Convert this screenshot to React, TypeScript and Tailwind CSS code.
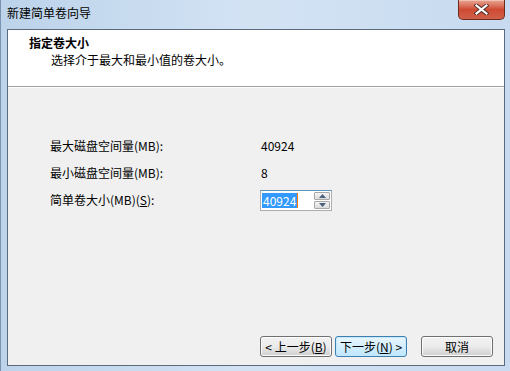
import React from "react";

const font = { fontFamily: '"Noto Sans CJK SC", "Liberation Sans", sans-serif' };

function Btn({ children, def }: { children: React.ReactNode; def?: boolean }) {
  return (
    <div
      className={
        "w-[72px] h-[21px] rounded-[3px] border flex items-center justify-center text-[12px] leading-none text-black " +
        (def
          ? "border-[#3c7fb1] bg-gradient-to-b from-[#eaf6fd] to-[#bee6fd] shadow-[inset_0_0_0_1px_#c5e8fd]"
          : "border-[#707070] bg-gradient-to-b from-[#f2f2f2] via-[#ebebeb] to-[#cfcfcf] shadow-[inset_0_0_0_1px_#fcfcfc]")
      }
    >
      {children}
    </div>
  );
}

export default function App() {
  return (
    <div
      className="w-[510px] h-[371px] relative overflow-hidden bg-gradient-to-r from-[#bcd3ea] via-[#d3e3f4] to-[#c7daef] border-l border-[#7a93b0] flex flex-col"
      style={font}
    >
      {/* title bar */}
      <div className="h-[29px] flex items-start justify-between shrink-0">
        <div className="pl-[6px] pt-[4px] text-[12px] leading-[18px] text-black">新建简单卷向导</div>
        <div className="mr-[5px] w-[47px] h-[20px] rounded-b-[5px] border border-t-0 border-[#6e2a1d] bg-gradient-to-b from-[#e6a695] via-[#cf4a33] to-[#d0604a] flex items-center justify-center shadow-[inset_0_1px_0_#f0c2b4]">
          <svg width="15" height="11" viewBox="0 0 15 11">
            <path d="M2.5 1.5 L12.5 9.5 M12.5 1.5 L2.5 9.5" stroke="#4a2a24" strokeWidth="4" strokeLinecap="square" />
            <path d="M2.5 1.5 L12.5 9.5 M12.5 1.5 L2.5 9.5" stroke="#ffffff" strokeWidth="2.2" strokeLinecap="square" />
          </svg>
        </div>
      </div>
      {/* client */}
      <div className="ml-[6px] mr-[5px] h-[337px] border border-[#5b6a7d] flex flex-col bg-[#f0f0f0]">
        <div className="h-[57px] bg-white border-b border-[#a0a0a0] shrink-0 pl-[21px] pt-[5px]">
          <div className="text-[12px] leading-[16px] font-bold text-black">指定卷大小</div>
          <div className="pl-[22px] text-[12px] leading-[18px] text-black">选择介于最大和最小值的卷大小。</div>
        </div>
        <div className="border-t border-white flex-1 flex flex-col">
          <div className="pl-[42px] pt-[49px] flex flex-col gap-[9px] text-[12px] text-black">
            <div className="flex items-center h-[18px]">
              <div className="w-[211px]">最大磁盘空间量(MB):</div>
              <div>40924</div>
            </div>
            <div className="flex items-center h-[18px]">
              <div className="w-[211px]">最小磁盘空间量(MB):</div>
              <div>8</div>
            </div>
            <div className="flex items-center h-[18px]">
              <div className="w-[210px]">
                简单卷大小(MB)(<span className="underline">S</span>):
              </div>
              <div className="flex h-[21px] border border-[#abadb3] border-t-[#5c93bc] bg-white">
                <div className="w-[52px] flex items-center pl-[1px]">
                  <span className="bg-[#3399ff] text-white leading-[15px] px-[1px]">40924</span>
                  <span className="w-[1px] h-[15px] bg-[#ff7a00]" />
                </div>
                <div className="w-[18px] flex flex-col gap-[1px] p-[1px] bg-white">
                  <div className="flex-1 border border-[#a8a8a8] rounded-[1px] bg-gradient-to-b from-[#f4f4f4] to-[#dcdcdc] flex items-center justify-center">
                    <svg width="7" height="4" viewBox="0 0 7 4"><path d="M3.5 0 L7 4 L0 4 Z" fill="#4c607e" /></svg>
                  </div>
                  <div className="flex-1 border border-[#a8a8a8] rounded-[1px] bg-gradient-to-b from-[#f4f4f4] to-[#dcdcdc] flex items-center justify-center">
                    <svg width="7" height="4" viewBox="0 0 7 4"><path d="M0 0 L7 0 L3.5 4 Z" fill="#4c607e" /></svg>
                  </div>
                </div>
              </div>
            </div>
          </div>
          <div className="mt-auto mb-[8px] flex justify-end pr-[11px] gap-[3px]">
            <Btn>&lt; 上一步(<span className="underline">B</span>)</Btn>
            <Btn def>下一步(<span className="underline">N</span>) &gt;</Btn>
            <div className="w-[8px]" />
            <Btn>取消</Btn>
          </div>
        </div>
      </div>
    </div>
  );
}
